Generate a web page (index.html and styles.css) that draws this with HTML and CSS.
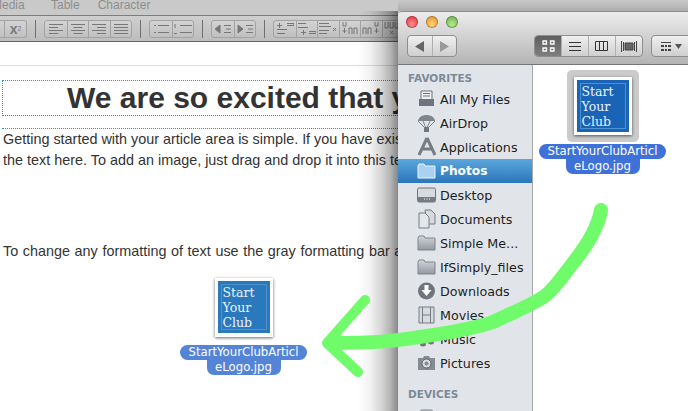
FILE: index.html
```html
<!DOCTYPE html>
<html>
	<head>
		<title>Drag a logo into the article</title>
		<link rel="stylesheet" href="styles.css">
	</head>
	<body>
		<svg class="defs" width="0" height="0">
			<linearGradient id="folderFill" x1="0" y1="0" x2="0" y2="1">
				<stop offset="0" stop-color="#d2d5da"/>
				<stop offset="1" stop-color="#9297a0"/>
			</linearGradient>
		</svg>
		<div class="editor">
			<div class="menubar">
				<span class="menu-media">Media</span>
				<span class="menu-table">Table</span>
				<span>Character</span>
			</div>
			<div class="toolbar">
				<div class="group group-cut">
					<div class="tool tool-stub"></div>
					<div class="tool tool-sup">x<sup>2</sup></div>
				</div>
				<i class="sep"></i>
				<div class="group">
					<div class="tool"><svg width="16" height="12" class="ico"><path d="M1 1.500h14M1 4.500h9M1 7.500h14M1 10.500h9"/></svg></div>
					<div class="tool"><svg width="16" height="12" class="ico"><path d="M1 1.500h14M3.500 4.500h9M1 7.500h14M3.500 10.500h9"/></svg></div>
					<div class="tool"><svg width="16" height="12" class="ico"><path d="M1 1.500h14M6 4.500h9M1 7.500h14M6 10.500h9"/></svg></div>
					<div class="tool"><svg width="16" height="12" class="ico"><path d="M1 1.500h14M1 4.500h14M1 7.500h14M1 10.500h14"/></svg></div>
				</div>
				<i class="sep"></i>
				<div class="group">
					<div class="tool"><svg width="16" height="12" class="ico"><path d="M1 2.500h2M1 9.500h2M5 2.500h11M5 9.500h11"/></svg></div>
					<div class="tool"><svg width="18" height="12" class="ico"><path d="M1 1v4M0 10.500h3M6 2.500h12M6 9.500h12"/></svg></div>
				</div>
				<i class="sep"></i>
				<div class="group">
					<div class="tool"><svg width="18" height="12" class="ico"><path d="M1 6l5-4v8zM10 2.500h7M12 6h5M10 9.500h7" fill="#777"/></svg></div>
					<div class="tool"><svg width="18" height="12" class="ico"><path d="M7 6L2 2v8zM10 2.500h7M12 6h5M10 9.500h7" fill="#777"/></svg></div>
				</div>
				<i class="sep"></i>
				<div class="group">
					<div class="tool"><svg width="18" height="13" class="ico"><path d="M1 3.500h5M3.500 1v5M11 1.500h7v2h-7M1 7.500h10M1 11.500h8"/></svg></div>
					<div class="tool"><svg width="18" height="13" class="ico"><path d="M0 1.500h8M0 5.500h10M3 10.500h5M5.500 8v5M11 9.500h7v2h-7"/></svg></div>
					<div class="tool"><svg width="18" height="13" class="ico"><path d="M0 1.500h10M0 4.500h12M0 8.500h10M0 11.500h8M14 6l3 3M17 6l-3 3"/></svg></div>
					<div class="tool"><svg width="18" height="13" class="ico"><path d="M2 0v4h3V0M3.500 6v5M1.500 9h4M8 12V6h3v6M13 12V6h3v6"/></svg></div>
					<div class="tool"><svg width="18" height="13" class="ico"><path d="M1 12V6h3v6M6 12V6h3v6M13 0v4h3V0M14.500 6v5M12.500 9h4"/></svg></div>
					<div class="tool"><svg width="18" height="13" class="ico"><path d="M1 0v6h3V0M6 0v6h3V0M11 0v6h3V0M6 9l3 3M9 9l-3 3"/></svg></div>
				</div>
			</div>
			<div class="ruler"></div>
			<div class="doc">
				<div class="title-box">
					<h1>We are so excited that you are here</h1>
				</div>
				<div class="text-box">
					<p>Getting started with your article area is simple. If you have existing content,</p>
					<p>the text here. To add an image, just drag and drop it into this text area.</p>
					<p class="para-gap">To change any formatting of text use the gray formatting bar above.</p>
				</div>
				<div class="file file-doc">
					<div class="thumb">
						<div class="logo">
							<div class="logo-line">Start<br>Your<br>Club</div>
						</div>
					</div>
					<div class="name name-1">StartYourClubArticl</div>
					<div class="name name-2">eLogo.jpg</div>
				</div>
			</div>
		</div>

		<div class="finder">
			<div class="titlebar">
				<div class="lights">
					<i class="light red"></i>
					<i class="light amber"></i>
					<i class="light green"></i>
				</div>
				<div class="controls">
					<div class="seg seg-nav">
						<div class="seg-btn"><svg width="9" height="11"><path d="M9 0v11L0 5.500z" fill="#666"/></svg></div>
						<div class="seg-btn"><svg width="9" height="11"><path d="M0 0v11l9-5.500z" fill="#999"/></svg></div>
					</div>
					<div class="seg seg-view">
						<div class="seg-btn active"><svg width="13" height="12" fill="none" stroke="#fff" stroke-width="1.300"><path d="M1 1h3.500v3H1zM8.500 1H12v3H8.500zM1 8h3.500v3H1zM8.500 8H12v3H8.500z"/></svg></div>
						<div class="seg-btn"><svg width="12" height="11" stroke="#333"><path d="M0 1.500h12M0 5.500h12M0 9.500h12"/></svg></div>
						<div class="seg-btn"><svg width="14" height="11" fill="none" stroke="#333"><path d="M.5.500h12v9H.5zM4.500.500v9M8.500.500v9"/></svg></div>
						<div class="seg-btn"><svg width="16" height="11" fill="none" stroke="#444"><path d="M.5 0v11M2.500 1v9M15.500 0v11M13.500 1v9"/><path d="M4 2h8v7H4z" fill="#666"/></svg></div>
					</div>
					<div class="seg seg-arrange">
						<div class="seg-btn"><svg width="22" height="11"><path d="M1 1h10v1H1zM1 4h3v2H1zM5 4h2v2H5zM8 4h3v2H8zM1 8h3v2H1zM5 8h2v2H5zM8 8h3v2H8z" fill="#444"/><path d="M15 3h7l-3.500 5z" fill="#555"/></svg></div>
					</div>
				</div>
			</div>
			<div class="finder-body">
				<div class="sidebar">
					<div class="side-head">FAVORITES</div>
					<div class="side-row"><svg width="20" height="18" viewBox="0 0 20 18"><path d="M4 1h11v9H4z" fill="#eef0f3" stroke="#70757d"/><path d="M6 3.500h7M6 6h7" stroke="#70757d"/><path d="M2 9h15v7H2z" fill="#6f747c"/></svg>All My Files</div>
					<div class="side-row"><svg width="20" height="20" viewBox="0 0 20 20"><path d="M1 8C2 0 17 0 18 8z" fill="#80858d"/><path d="M1 8l7 7M18 8l-7 7M6 8l3 7M13 8l-3 7" stroke="#80858d"/><path d="M7 14h5v5H7z" fill="#70757d"/></svg>AirDrop</div>
					<div class="side-row"><svg width="20" height="20" viewBox="0 0 20 20"><path d="M10 1L2 18M10 1l8 17M5 12h10" stroke="#777c84" stroke-width="3" fill="none"/></svg>Applications</div>
					<div class="side-row side-selected"><svg width="20" height="18" viewBox="0 0 20 18"><path d="M1 4l1-2h5l1 2h10v12H1z" fill="#a9d2f0" stroke="#eaf5fc"/></svg>Photos</div>
					<div class="side-row"><svg width="20" height="18" viewBox="0 0 20 18"><rect x=".5" y="2" width="18" height="14" rx="1.500" fill="#d7dade" stroke="#70757d"/><path d="M1 11h17v5H1z" fill="#777c84"/><path d="M7 13h1M9.500 13h1M12 13h1" stroke="#fff"/></svg>Desktop</div>
					<div class="side-row"><svg width="20" height="20" viewBox="0 0 20 20"><path d="M8 1h6l4 4v10h-8z" fill="#d7dade" stroke="#777c84"/><path d="M2 4h6l4 4v11H2z" fill="#e4e7ea" stroke="#777c84"/></svg>Documents</div>
					<div class="side-row"><svg width="20" height="18" viewBox="0 0 20 18"><path d="M1 4l1-2h5l1 2h10v12H1z" fill="url(#folderFill)" stroke="#80858d"/></svg>Simple Me...</div>
					<div class="side-row"><svg width="20" height="18" viewBox="0 0 20 18"><path d="M1 4l1-2h5l1 2h10v12H1z" fill="url(#folderFill)" stroke="#80858d"/></svg>IfSimply_files</div>
					<div class="side-row"><svg width="20" height="20" viewBox="0 0 20 20"><circle cx="9.500" cy="10" r="8.500" fill="#70757d"/><path d="M7.500 4h4v5h3l-5 6-5-6h3z" fill="#fff"/></svg>Downloads</div>
					<div class="side-row"><svg width="20" height="20" viewBox="0 0 20 20"><path d="M2 2h15v16H2z" fill="#d7dade" stroke="#777c84"/><path d="M5.500 2v16M13.500 2v16M5.500 10h8" stroke="#777c84"/></svg>Movies</div>
					<div class="side-row"><svg width="20" height="20" viewBox="0 0 20 20"><path d="M8 14V3l8-2v11" stroke="#70757d" fill="none"/><ellipse cx="6" cy="15" rx="3" ry="2.500" fill="#70757d"/><ellipse cx="14" cy="13" rx="3" ry="2.500" fill="#70757d"/></svg>Music</div>
					<div class="side-row"><svg width="20" height="18" viewBox="0 0 20 18"><path d="M1 4h5l1-2h5l1 2h5v12H1z" fill="#868b93"/><circle cx="9.500" cy="9.500" r="4.500" fill="#d7dade" stroke="#5f646c"/><circle cx="9.500" cy="9.500" r="2" fill="#868b93"/></svg>Pictures</div>
					<div class="side-head side-head-2">DEVICES</div>
					<div class="side-row"><svg width="20" height="18" viewBox="0 0 20 18"><rect x="3" y="1" width="13" height="16" rx="2" fill="#c9ccd1" stroke="#80858d"/></svg>Clip Cam</div>
				</div>
				<div class="files">
					<div class="file file-finder">
						<div class="thumb-sel">
							<div class="thumb">
								<div class="logo">
									<div class="logo-line">Start<br>Your<br>Club</div>
								</div>
							</div>
						</div>
						<div class="name name-1">StartYourClubArticl</div>
						<div class="name name-2">eLogo.jpg</div>
					</div>
				</div>
			</div>
		</div>

		<svg class="arrow" width="688" height="411" fill="none" stroke="#6ffb6a" stroke-linecap="round" stroke-linejoin="round">
			<path d="M601 210C598 228 585 248 573 263C562 277 555 288 545 296C530 306 510 314 493 322C470 330 445 333 420 337C400 340 385 343 330 343" stroke-width="14"/>
			<path d="M365 300L327 343L358 372" stroke-width="10"/>
		</svg>
	</body>
</html>
```
FILE: styles.css
```css
html, body {
	margin: 0;
	height: 100%;
	overflow: hidden;
}
body {
	position: relative;
	background: #fff;
	font-family: "Liberation Sans", arial, sans-serif;
}
.defs {
	position: absolute;
}

/* editor behind the finder window */
.editor {
	height: 411px;
	overflow: hidden;
}
.menubar {
	display: flex;
	height: 15px;
	gap: 18px;
	background: #c9c9c9;
	border-bottom: 1px solid #7d7d7d;
	color: #8e8e8e;
	font-size: 12px;
	line-height: 11px;
	overflow: hidden;
}
.menu-media {
	margin-left: -8px;
	width: 41px;
}
.toolbar {
	display: flex;
	align-items: center;
	gap: 8px;
	height: 25px;
	background: linear-gradient(#cfcfcf, #bdbdbd);
	border-bottom: 1px solid #666;
	overflow: hidden;
}
.sep {
	flex: none;
	width: 1px;
	height: 18px;
	background: #6f6f6f;
}
.group {
	flex: none;
	display: flex;
	height: 16px;
	border: 1px solid #a3a3a3;
	border-radius: 3px;
	background: linear-gradient(#d3d3d3, #c0c0c0);
}
.group-cut {
	border-left: 0;
	border-radius: 0 3px 3px 0;
}
.tool {
	display: flex;
	align-items: center;
	justify-content: center;
	width: 21.500px;
	border-left: 1px solid #a3a3a3;
	box-sizing: border-box;
}
.tool:first-child {
	border-left: 0;
}
.tool-stub {
	width: 4px;
}
.tool-sup {
	width: 22px;
	color: #7a7a7a;
	font-size: 14px;
	font-weight: bold;
}
.tool-sup sup {
	font-size: 7px;
	font-weight: normal;
	line-height: 0;
}
.ico {
	stroke: #777;
	fill: none;
}
.ruler {
	height: 23px;
	background: #fff;
	border-bottom: 1px solid #ddd;
}
.doc {
	padding: 14px 0 0 2px;
}
.title-box {
	height: 34px;
	border: 1px dotted #1398ee;
	border-right: 0;
}
h1 {
	margin: 0;
	padding-left: 64px;
	color: #333;
	font-size: 30px;
	line-height: 34px;
	white-space: nowrap;
}
.text-box {
	margin-top: 12px;
	border-top: 1px dotted #1398ee;
}
.text-box p {
	margin: 0 0 0 1px;
	color: #333;
	font-size: 14.400px;
	line-height: 21px;
	white-space: nowrap;
}
.text-box p.para-gap {
	margin-top: 70px;
	word-spacing: .6px;
}

/* dropped file, same block in both windows */
.file {
	display: flex;
	flex-direction: column;
	align-items: center;
	font-family: "DejaVu Sans", sans-serif;
}
.file-doc {
	width: 127px;
	margin: 16px 0 0 178px;
}
.thumb {
	box-sizing: border-box;
	width: 58px;
	height: 59px;
	padding: 3px;
	background: #fff;
	box-shadow: 0 1px 3px rgba(0, 0, 0, .6);
}
.logo {
	height: 52px;
	padding: 3px;
	box-sizing: border-box;
	background: #2a79bd;
}
.logo-line {
	height: 100%;
	box-sizing: border-box;
	padding: 0 0 0 1px;
	border: 1px solid #4d92cf;
	color: #eaf2f9;
	font-family: "DejaVu Serif", serif;
	font-size: 12.500px;
	line-height: 15px;
}
.name {
	color: #fff;
	font-size: 11.700px;
	line-height: 15px;
	text-align: center;
	white-space: nowrap;
	background: #5484d6;
}
.file-doc .thumb {
	margin-bottom: 8px;
}
.name-1 {
	width: 127px;
	border-radius: 8px;
}
.name-2 {
	width: 74px;
	border-radius: 0 0 7px 7px;
}

/* finder window */
.finder {
	position: absolute;
	left: 398px;
	top: 11px;
	width: 320px;
	height: 400px;
	border-radius: 4px 4px 0 0;
	background: #fff;
}
.finder::before {
	content: "";
	position: absolute;
	top: 0;
	bottom: 0;
	right: 100%;
	width: 40px;
	background: linear-gradient(to left, rgba(0, 0, 0, .47), rgba(0, 0, 0, .3) 18%, rgba(0, 0, 0, .16) 42%, rgba(0, 0, 0, .05) 70%, rgba(0, 0, 0, 0));
}
.finder::after {
	content: "";
	position: absolute;
	left: 0;
	right: 0;
	bottom: 100%;
	height: 11px;
	background: linear-gradient(to top, rgba(0, 0, 0, .14), rgba(0, 0, 0, 0));
}
.titlebar {
	box-sizing: border-box;
	height: 54px;
	padding: 4px 9px 0;
	border-top: 1px solid #8f8f8f;
	border-bottom: 1px solid #777;
	border-radius: 4px 4px 0 0;
	background: linear-gradient(#ececec, #b4b4b4);
}
.lights {
	display: flex;
	gap: 8px;
	margin-left: -1px;
}
.light {
	width: 12px;
	height: 12px;
	border-radius: 50%;
	box-shadow: inset 0 0 0 1px rgba(0, 0, 0, .25);
}
.red {
	background: radial-gradient(circle at 50% 70%, #ff8d8d, #e0252f);
}
.amber {
	background: radial-gradient(circle at 50% 70%, #ffd27a, #e08a1c);
}
.green {
	background: radial-gradient(circle at 50% 70%, #b9ea91, #5fa63f);
}
.controls {
	display: flex;
	margin-top: 7px;
}
.seg {
	display: flex;
	box-sizing: border-box;
	height: 22px;
	border: 1px solid #8e8e8e;
	border-radius: 4px;
	background: linear-gradient(#f0f0f0, #cfcfcf);
	overflow: hidden;
}
.seg-nav {
	width: 52px;
}
.seg-nav .seg-btn {
	flex: 1;
}
.seg-view {
	width: 112px;
	margin-left: 77px;
}
.seg-view .seg-btn {
	flex: 1;
}
.seg-arrange {
	width: 60px;
	margin-left: 8px;
}
.seg-arrange .seg-btn {
	justify-content: flex-start;
	padding-left: 8px;
}
.seg-btn {
	display: flex;
	align-items: center;
	justify-content: center;
	border-left: 1px solid #b0b0b0;
}
.seg-btn:first-child {
	border-left: 0;
}
.seg-btn.active {
	background: linear-gradient(#5f5f5f, #7f7f7f);
}
.finder-body {
	display: flex;
	height: 346px;
}
.sidebar {
	flex: none;
	box-sizing: border-box;
	width: 135px;
	padding-top: 4px;
	background: #e1e5ea;
	border-right: 1px solid #a9a9a9;
	font-family: "DejaVu Sans", sans-serif;
	font-size: 12.700px;
	color: #1e1e1e;
	overflow: hidden;
}
.side-head {
	height: 18px;
	padding-left: 10px;
	color: #7c8a99;
	font-size: 10.500px;
	font-weight: bold;
	line-height: 18px;
}
.side-head-2 {
	margin-top: 7px;
	height: 24px;
	line-height: 24px;
}
.side-row {
	display: flex;
	align-items: center;
	gap: 3px;
	height: 24px;
	padding-left: 19px;
	white-space: nowrap;
}
.side-selected {
	color: #fff;
	font-weight: bold;
	font-size: 12.200px;
	background: linear-gradient(#5aa7dd, #2a76bb);
}
.files {
	flex: 1;
	background: #fff;
}
.file-finder {
	width: 127px;
	margin: 5px 0 0 6px;
}
.thumb-sel {
	box-sizing: border-box;
	width: 72px;
	height: 72px;
	margin-bottom: 2px;
	padding: 7px;
	border-radius: 5px;
	background: #cbcbcb;
}
.file-finder .thumb {
	height: 58px;
}
.file-finder .logo {
	background: #1a64b8;
}
.file-finder .name {
	background: #3f72d9;
}

/* hand drawn arrow over both windows */
.arrow {
	position: absolute;
	left: 0;
	top: 0;
}
```
